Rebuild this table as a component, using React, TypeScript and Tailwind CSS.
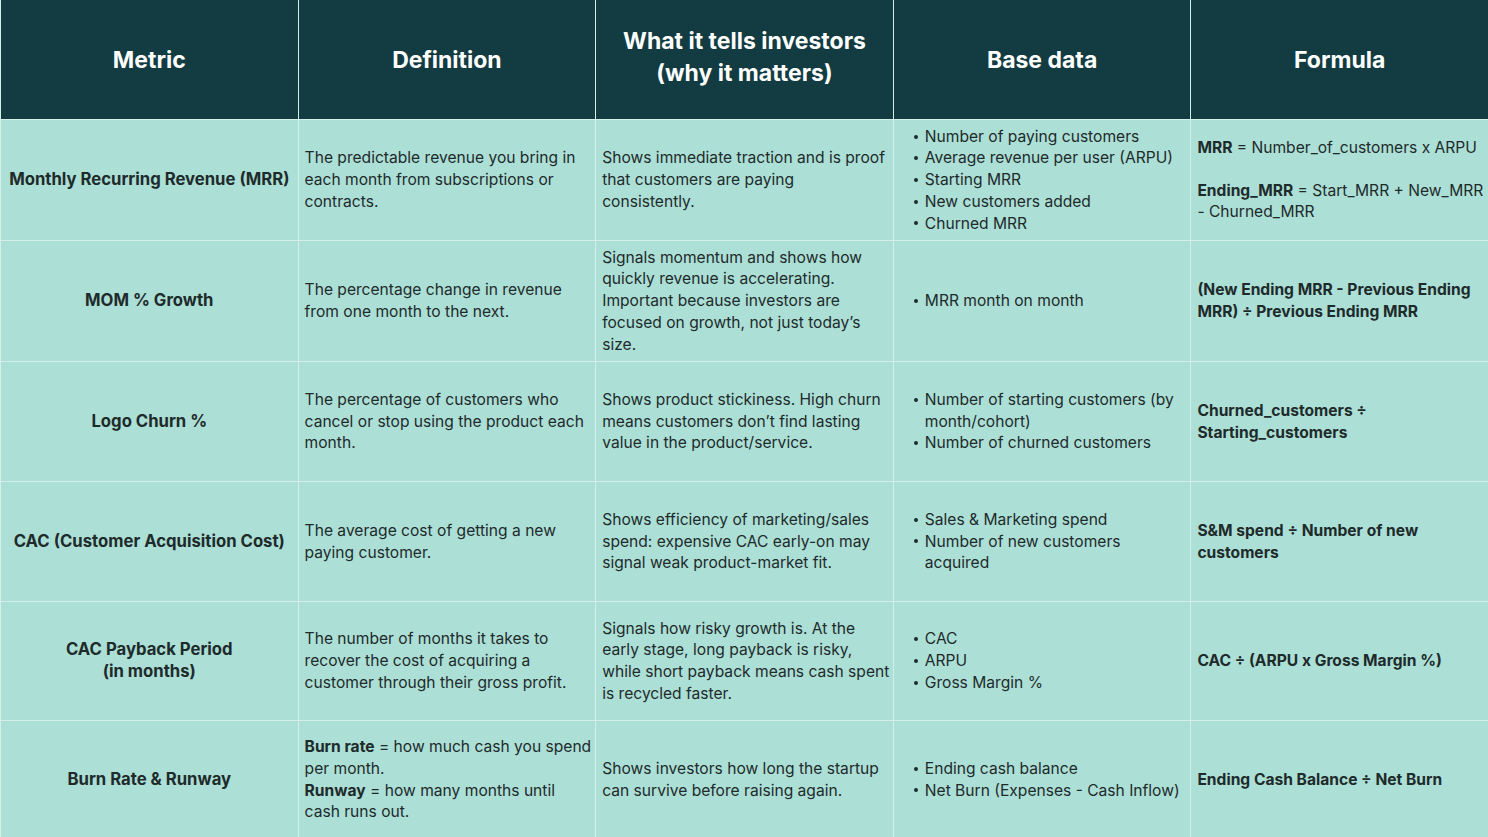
import React from 'react';

const headers = ['Metric', 'Definition', 'What it tells investors\n(why it matters)', 'Base data', 'Formula'];

type Row = {
  metric: React.ReactNode;
  definition: React.ReactNode;
  tells: React.ReactNode;
  base: string[];
  formula: React.ReactNode;
  height: string;
};

const B = ({ children }: { children: React.ReactNode }) => <span className="font-bold">{children}</span>;

const rows: Row[] = [
  {
    metric: 'Monthly Recurring Revenue (MRR)',
    definition: 'The predictable revenue you bring in each month from subscriptions or contracts.',
    tells: (
      <>
        Shows immediate traction and is proof that customers are paying
        <br />
        consistently.
      </>
    ),
    base: ['Number of paying customers', 'Average revenue per user (ARPU)', 'Starting MRR', 'New customers added', 'Churned MRR'],
    formula: (
      <div className="flex flex-col gap-[21px]">
        <p>
          <B>MRR</B> = Number_of_customers x ARPU
        </p>
        <p>
          <B>Ending_MRR</B> = Start_MRR + New_MRR - Churned_MRR
        </p>
      </div>
    ),
    height: 'h-[120px]',
  },
  {
    metric: 'MOM % Growth',
    definition: 'The percentage change in revenue from one month to the next.',
    tells: 'Signals momentum and shows how quickly revenue is accelerating. Important because investors are focused on growth, not just today’s size.',
    base: ['MRR month on month'],
    formula: <B>(New Ending MRR - Previous Ending MRR) ÷ Previous Ending MRR</B>,
    height: 'h-[120px]',
  },
  {
    metric: 'Logo Churn %',
    definition: 'The percentage of customers who cancel or stop using the product each month.',
    tells: 'Shows product stickiness. High churn means customers don’t find lasting value in the product/service.',
    base: ['Number of starting customers (by month/cohort)', 'Number of churned customers'],
    formula: <B>Churned_customers ÷ Starting_customers</B>,
    height: 'h-[119px]',
  },
  {
    metric: 'CAC (Customer Acquisition Cost)',
    definition: 'The average cost of getting a new paying customer.',
    tells: 'Shows efficiency of marketing/sales spend: expensive CAC early-on may signal weak product-market fit.',
    base: ['Sales & Marketing spend', 'Number of new customers\nacquired'],
    formula: <B>S&amp;M spend ÷ Number of new customers</B>,
    height: 'h-[119px]',
  },
  {
    metric: (
      <>
        CAC Payback Period
        <br />
        (in months)
      </>
    ),
    definition: 'The number of months it takes to recover the cost of acquiring a customer through their gross profit.',
    tells: 'Signals how risky growth is. At the early stage, long payback is risky, while short payback means cash spent is recycled faster.',
    base: ['CAC', 'ARPU', 'Gross Margin %'],
    formula: <B>CAC ÷ (ARPU x Gross Margin %)</B>,
    height: 'h-[118px]',
  },
  {
    metric: 'Burn Rate & Runway',
    definition: (
      <>
        <B>Burn rate</B> = how much cash you spend per month.
        <br />
        <B>Runway</B> = how many months until cash runs out.
      </>
    ),
    tells: 'Shows investors how long the startup can survive before raising again.',
    base: ['Ending cash balance', 'Net Burn (Expenses - Cash Inflow)'],
    formula: <B>Ending Cash Balance ÷ Net Burn</B>,
    height: 'h-[117px]',
  },
];

function Cell({ children }: { children: React.ReactNode }) {
  return (
    <div className="flex items-center bg-[#acdfd6] pl-[6px] pr-px">
      <div>{children}</div>
    </div>
  );
}

export default function App() {
  return (
    <div
      className="h-[837px] w-[1488px] overflow-hidden bg-[#d4eee8] text-[15.6px] leading-[21.7px] text-[#1e2b2b]"
      style={{ fontFamily: 'Inter, "Noto Sans", sans-serif' }}
    >
      <div className="grid grid-cols-5 gap-px pl-px">
        {headers.map((h, i) => (
          <div
            key={h}
            className="flex h-[119px] items-center justify-center bg-[#123c41] text-center text-[23px] leading-[32px] font-bold text-white"
          >
            <div className={i === 2 ? 'whitespace-pre-line pb-[6px]' : 'whitespace-pre-line'}>{h}</div>
          </div>
        ))}
        {rows.map((r, i) => (
          <React.Fragment key={i}>
            <div className={`flex ${r.height} items-center justify-center bg-[#acdfd6] text-center text-[16.7px] font-bold`}>
              <div>{r.metric}</div>
            </div>
            <Cell>{r.definition}</Cell>
            <Cell>{r.tells}</Cell>
            <Cell>
              <ul className="pl-[14px]">
                {r.base.map((b) => (
                  <li key={b} className="flex">
                    <span className="flex h-[21.7px] w-[11px] shrink-0 items-center">
                      <span className="h-[4px] w-[4px] rounded-full bg-[#1e2b2b]" />
                    </span>
                    <span className="whitespace-pre-line">{b}</span>
                  </li>
                ))}
              </ul>
            </Cell>
            <Cell>{r.formula}</Cell>
          </React.Fragment>
        ))}
      </div>
    </div>
  );
}
